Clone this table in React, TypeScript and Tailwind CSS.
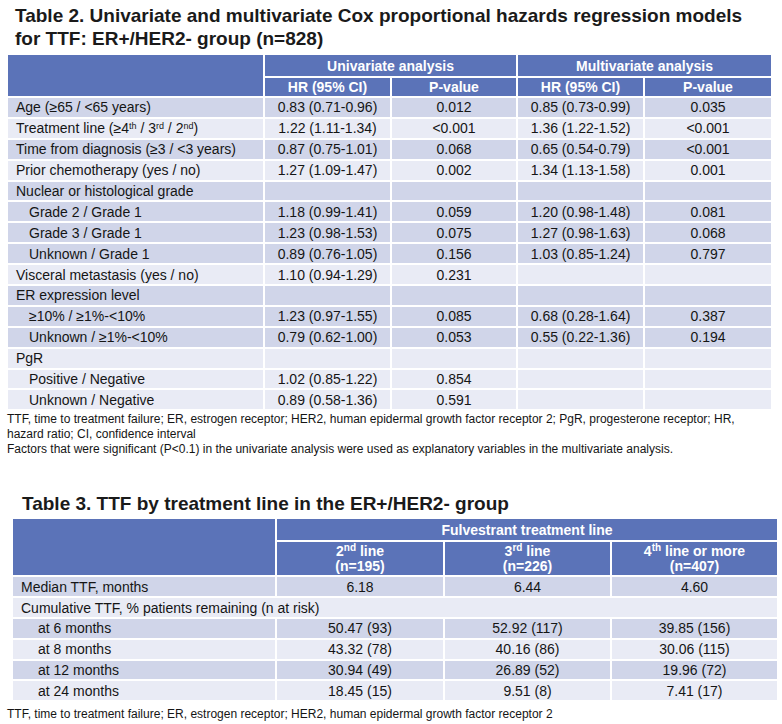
import React from "react";

type Row2 = {
  label: React.ReactNode;
  indent?: boolean;
  hr1?: string;
  p1?: string;
  hr2?: string;
  p2?: string;
  dark: boolean;
};

const DARK = "bg-[#d0d5e9]";
const LIGHT = "bg-[#e9ebf5]";
const HEAD = "bg-[#5b73b8]";

const rows2: Row2[] = [
  { label: "Age (≥65 / <65 years)", hr1: "0.83 (0.71-0.96)", p1: "0.012", hr2: "0.85 (0.73-0.99)", p2: "0.035", dark: true },
  {
    label: (
      <>
        Treatment line (≥4<sup className="text-[9px]">th</sup> / 3<sup className="text-[9px]">rd</sup> / 2
        <sup className="text-[9px]">nd</sup>)
      </>
    ),
    hr1: "1.22 (1.11-1.34)",
    p1: "<0.001",
    hr2: "1.36 (1.22-1.52)",
    p2: "<0.001",
    dark: false,
  },
  { label: "Time from diagnosis (≥3 / <3 years)", hr1: "0.87 (0.75-1.01)", p1: "0.068", hr2: "0.65 (0.54-0.79)", p2: "<0.001", dark: true },
  { label: "Prior chemotherapy (yes / no)", hr1: "1.27 (1.09-1.47)", p1: "0.002", hr2: "1.34 (1.13-1.58)", p2: "0.001", dark: false },
  { label: "Nuclear or histological grade", dark: true },
  { label: "Grade 2 / Grade 1", indent: true, hr1: "1.18 (0.99-1.41)", p1: "0.059", hr2: "1.20 (0.98-1.48)", p2: "0.081", dark: true },
  { label: "Grade 3 / Grade 1", indent: true, hr1: "1.23 (0.98-1.53)", p1: "0.075", hr2: "1.27 (0.98-1.63)", p2: "0.068", dark: true },
  { label: "Unknown / Grade 1", indent: true, hr1: "0.89 (0.76-1.05)", p1: "0.156", hr2: "1.03 (0.85-1.24)", p2: "0.797", dark: true },
  { label: "Visceral metastasis (yes / no)", hr1: "1.10 (0.94-1.29)", p1: "0.231", dark: false },
  { label: "ER expression level", dark: true },
  { label: "≥10% / ≥1%-<10%", indent: true, hr1: "1.23 (0.97-1.55)", p1: "0.085", hr2: "0.68 (0.28-1.64)", p2: "0.387", dark: true },
  { label: "Unknown / ≥1%-<10%", indent: true, hr1: "0.79 (0.62-1.00)", p1: "0.053", hr2: "0.55 (0.22-1.36)", p2: "0.194", dark: true },
  { label: "PgR", dark: false },
  { label: "Positive / Negative", indent: true, hr1: "1.02 (0.85-1.22)", p1: "0.854", dark: false },
  { label: "Unknown / Negative", indent: true, hr1: "0.89 (0.58-1.36)", p1: "0.591", dark: false },
];

const rows3 = [
  { label: "at 6 months", a: "50.47 (93)", b: "52.92 (117)", c: "39.85 (156)", dark: true },
  { label: "at 8 months", a: "43.32 (78)", b: "40.16 (86)", c: "30.06 (115)", dark: false },
  { label: "at 12 months", a: "30.94 (49)", b: "26.89 (52)", c: "19.96 (72)", dark: true },
  { label: "at 24 months", a: "18.45 (15)", b: "9.51 (8)", c: "7.41 (17)", dark: false },
];

const cell = "border-2 border-white leading-none";

function Table2() {
  return (
    <table className="w-[765px] table-fixed border-collapse text-[14px] text-[#151515] -ml-px">
      <colgroup>
        <col className="w-[257px]" />
        <col className="w-[127px]" />
        <col className="w-[126px]" />
        <col className="w-[127px]" />
        <col className="w-[128px]" />
      </colgroup>
      <thead>
        <tr className="h-[23px]">
          <th rowSpan={2} className={`${HEAD} ${cell}`}></th>
          <th colSpan={2} className={`${HEAD} ${cell} text-white font-bold`}>
            Univariate analysis
          </th>
          <th colSpan={2} className={`${HEAD} ${cell} text-white font-bold`}>
            Multivariate analysis
          </th>
        </tr>
        <tr className="h-[20px]">
          {["HR (95% CI)", "P-value", "HR (95% CI)", "P-value"].map((h, i) => (
            <th key={i} className={`${HEAD} ${cell} text-white font-bold`}>
              {h}
            </th>
          ))}
        </tr>
      </thead>
      <tbody>
        {rows2.map((r, i) => {
          const bg = r.dark ? DARK : LIGHT;
          return (
            <tr key={i} className="h-[20.9px]">
              <td className={`${bg} ${cell} ${r.indent ? "pl-[21px]" : "pl-[8px]"}`}>{r.label}</td>
              <td className={`${bg} ${cell} text-center`}>{r.hr1}</td>
              <td className={`${bg} ${cell} text-center`}>{r.p1}</td>
              <td className={`${bg} ${cell} text-center`}>{r.hr2}</td>
              <td className={`${bg} ${cell} text-center`}>{r.p2}</td>
            </tr>
          );
        })}
      </tbody>
    </table>
  );
}

function Table3() {
  return (
    <table className="w-[766px] table-fixed border-collapse text-[14px] text-[#151515] -ml-px">
      <colgroup>
        <col className="w-[264px]" />
        <col className="w-[168px]" />
        <col className="w-[167px]" />
        <col className="w-[167px]" />
      </colgroup>
      <thead>
        <tr className="h-[23px]">
          <th rowSpan={2} className={`${HEAD} ${cell}`}></th>
          <th colSpan={3} className={`${HEAD} ${cell} text-white font-bold`}>
            Fulvestrant treatment line
          </th>
        </tr>
        <tr className="h-[35px]">
          {[
            ["2", "nd", " line", "(n=195)"],
            ["3", "rd", " line", "(n=226)"],
            ["4", "th", " line or more", "(n=407)"],
          ].map((h, i) => (
            <th key={i} className={`${HEAD} border-2 border-white text-white font-bold leading-[15px]`}>
              <div>
                {h[0]}
                <sup className="text-[10px]">{h[1]}</sup>
                {h[2]}
              </div>
              <div>{h[3]}</div>
            </th>
          ))}
        </tr>
      </thead>
      <tbody>
        <tr className="h-[20.8px]">
          <td className={`${DARK} ${cell} pl-[8px]`}>Median TTF, months</td>
          <td className={`${DARK} ${cell} text-center`}>6.18</td>
          <td className={`${DARK} ${cell} text-center`}>6.44</td>
          <td className={`${DARK} ${cell} text-center`}>4.60</td>
        </tr>
        <tr className="h-[20.8px]">
          <td colSpan={4} className={`${LIGHT} ${cell} pl-[8px]`}>
            Cumulative TTF, % patients remaining (n at risk)
          </td>
        </tr>
        {rows3.map((r, i) => {
          const bg = r.dark ? DARK : LIGHT;
          return (
            <tr key={i} className="h-[20.8px]">
              <td className={`${bg} ${cell} pl-[25px]`}>{r.label}</td>
              <td className={`${bg} ${cell} text-center`}>{r.a}</td>
              <td className={`${bg} ${cell} text-center`}>{r.b}</td>
              <td className={`${bg} ${cell} text-center`}>{r.c}</td>
            </tr>
          );
        })}
      </tbody>
    </table>
  );
}

export default function App() {
  return (
    <div
      className="w-[782px] h-[724px] bg-white overflow-hidden text-[#151515]"
      style={{ fontFamily: '"Liberation Sans", Arial, sans-serif' }}
    >
      <div className="pl-[15px] pt-[4px] text-[19px] font-bold leading-[23px] text-[#1a1a1a]">
        Table 2. Univariate and multivariate Cox proportional hazards regression models
        <br />
        for TTF: ER+/HER2- group (n=828)
      </div>
      <div className="pl-[7px] mt-[3px]">
        <Table2 />
      </div>
      <div className="pl-[7px] pt-[1px] text-[12px] leading-[15px]">
        <div>
          TTF, time to treatment failure; ER, estrogen receptor; HER2, human epidermal growth factor receptor 2; PgR, progesterone receptor; HR,
        </div>
        <div>hazard ratio; CI, confidence interval</div>
        <div>Factors that were significant (P&lt;0.1) in the univariate analysis were used as explanatory variables in the multivariate analysis.</div>
      </div>
      <div className="pl-[22px] mt-[35px] text-[19px] font-bold leading-[23px] text-[#1a1a1a]">
        Table 3. TTF by treatment line in the ER+/HER2- group
      </div>
      <div className="pl-[12px] mt-[2px]">
        <Table3 />
      </div>
      <div className="pl-[7px] pt-[5px] text-[12px] leading-[15px]">
        TTF, time to treatment failure; ER, estrogen receptor; HER2, human epidermal growth factor receptor 2
      </div>
    </div>
  );
}
